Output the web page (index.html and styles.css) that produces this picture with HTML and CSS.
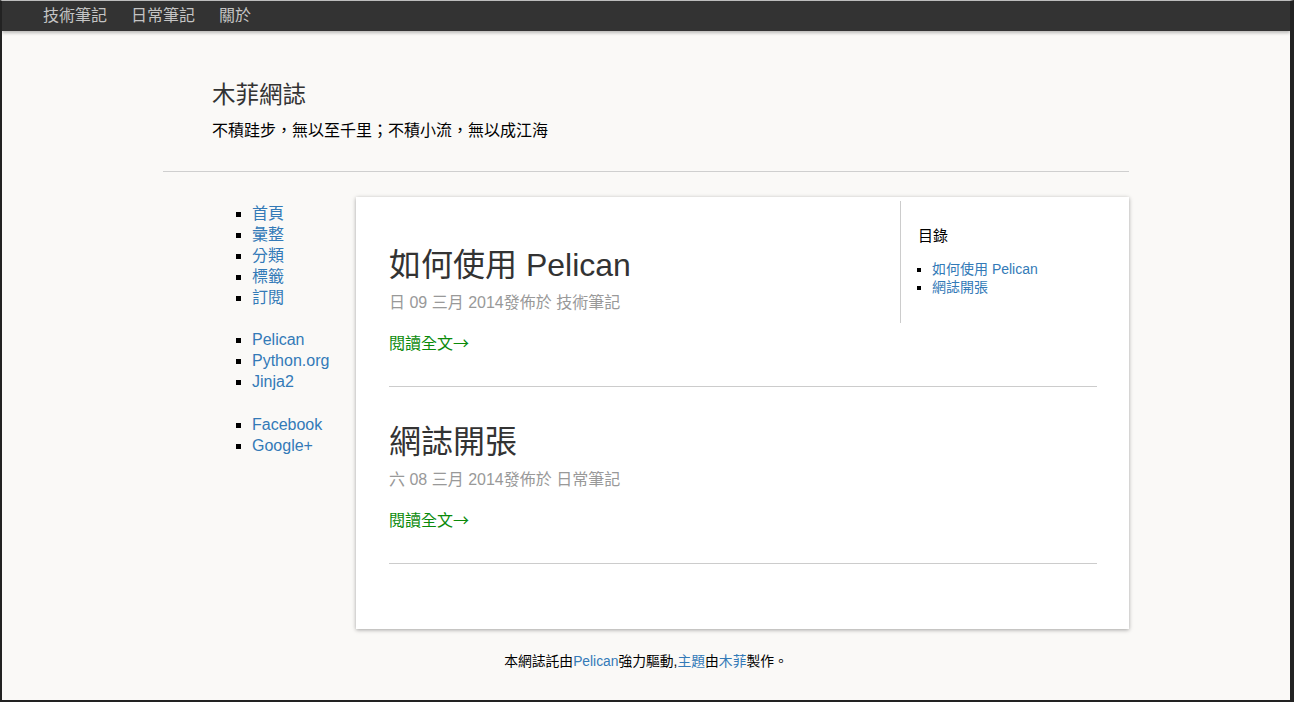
FILE: index.html
```html
<!DOCTYPE html>
<html lang="zh-Hant">
<head>
<meta charset="utf-8">
<title>木菲網誌</title>
<link rel="stylesheet" href="styles.css">
</head>
<body>
<div class="frame">
  <nav class="topnav">
    <a href="#">技術筆記</a>
    <a href="#">日常筆記</a>
    <a href="#">關於</a>
  </nav>
  <div class="container">
    <header class="site-header">
      <h1 class="site-title">木菲網誌</h1>
      <p class="site-tagline">不積跬步，無以至千里；不積小流，無以成江海</p>
    </header>
    <div class="content-row">
      <aside class="sidebar">
        <ul class="side-list">
          <li><a href="#">首頁</a></li>
          <li><a href="#">彙整</a></li>
          <li><a href="#">分類</a></li>
          <li><a href="#">標籤</a></li>
          <li><a href="#">訂閱</a></li>
        </ul>
        <ul class="side-list">
          <li><a href="#">Pelican</a></li>
          <li><a href="#">Python.org</a></li>
          <li><a href="#">Jinja2</a></li>
        </ul>
        <ul class="side-list">
          <li><a href="#">Facebook</a></li>
          <li><a href="#">Google+</a></li>
        </ul>
      </aside>
      <main class="card">
        <div class="toc">
          <h3 class="toc-title">目錄</h3>
          <ul class="toc-list">
            <li><a href="#">如何使用 Pelican</a></li>
            <li><a href="#">網誌開張</a></li>
          </ul>
        </div>
        <article class="post">
          <h2 class="post-title">如何使用 Pelican</h2>
          <p class="post-meta">日 09 三月 2014發佈於 技術筆記</p>
          <a class="read-more" href="#">閱讀全文<span class="arrow">→</span></a>
          <hr class="post-sep">
        </article>
        <article class="post">
          <h2 class="post-title">網誌開張</h2>
          <p class="post-meta">六 08 三月 2014發佈於 日常筆記</p>
          <a class="read-more" href="#">閱讀全文<span class="arrow">→</span></a>
          <hr class="post-sep">
        </article>
      </main>
    </div>
    <footer class="site-footer">本網誌託由<a href="#">Pelican</a>強力驅動,<a href="#">主題</a>由<a href="#">木菲</a>製作。</footer>
  </div>
</div>
</body>
</html>
```

FILE: styles.css
```css
* { box-sizing: border-box; }

html, body {
  margin: 0;
  padding: 0;
  background: #222;
}

body {
  font-family: "Liberation Sans", "Noto Sans CJK SC", Arial, sans-serif;
  color: #000;
}

a { text-decoration: none; color: #337ab7; }

.frame {
  height: 702px;
  background: #faf9f7;
  border-top: 1px solid #bdbdbd;
  border-left: 2px solid #222;
  border-right: 4px solid #222;
  border-bottom: 2px solid #222;
  overflow: hidden;
}

.topnav {
  height: 30px;
  background: #333;
  display: flex;
  align-items: center;
  padding-left: 29px;
  box-shadow: 0 2px 3px rgba(0,0,0,0.25);
}

.topnav a {
  color: #c4c4c4;
  font-size: 16px;
  line-height: 30px;
  padding: 0 12px;
}

.container {
  width: 966px;
  margin: 0 auto;
}

.site-header {
  padding: 49px 0 30px 49px;
  border-bottom: 1px solid #cfcfcf;
}

.site-title {
  margin: 0;
  font-size: 23.5px;
  font-weight: normal;
  line-height: 30px;
  color: #333;
}

.site-tagline {
  margin: 11px 0 0;
  font-size: 16px;
  line-height: 20px;
  color: #000;
}

.content-row {
  display: flex;
  align-items: flex-start;
  margin-top: 25px;
}

.sidebar {
  width: 193px;
  flex: none;
  padding-top: 6px;
}

.side-list {
  margin: 0 0 21px;
  padding-left: 89px;
  list-style: square;
  font-size: 16px;
  line-height: 21px;
}

.side-list:last-child { margin-top: 22px; }

.card {
  flex: 1;
  background: #fff;
  box-shadow: 0 1px 4px rgba(0,0,0,0.35);
  padding: 13px 32px 65px 33px;
}

.toc {
  float: right;
  width: 197px;
  margin-top: -9px;
  height: 122px;
  border-left: 1px solid #ccc;
  padding: 25px 0 0 17px;
}

.toc-title {
  margin: 0;
  font-size: 15px;
  font-weight: normal;
  line-height: 20px;
  color: #000;
}

.toc-list {
  margin: 14px 0 0;
  padding-left: 14px;
  list-style: square;
  font-size: 14px;
  line-height: 18px;
}

.post {
  padding-top: 36px;
}

.post-title {
  margin: 0;
  font-size: 32px;
  font-weight: normal;
  line-height: 38px;
  color: #333;
}

.post-meta {
  margin: 9px 0 0;
  font-size: 16px;
  line-height: 20px;
  color: #999;
}

.read-more {
  display: block;
  height: 20px;
  margin-top: 20px;
  font-size: 16px;
  line-height: 22px;
  color: #0a8a0a;
}

.arrow {
  font-family: "Noto Sans CJK SC", sans-serif;
  line-height: 1;
}

.post-sep {
  margin: 33px 0 0;
  border: 0;
  border-top: 1px solid #ccc;
  height: 0;
}

.site-footer {
  text-align: center;
  margin-top: 24px;
  font-size: 13.8px;
  line-height: 18px;
  color: #000;
}
```
